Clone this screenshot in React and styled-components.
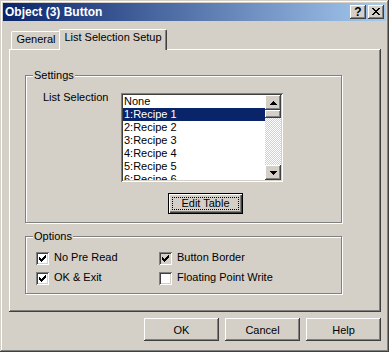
import React from 'react';
import styled, { createGlobalStyle } from 'styled-components';

const face = '#d4d0c8';

const GlobalStyle = createGlobalStyle`
  * { box-sizing: border-box; }
  html, body { margin: 0; padding: 0; background: ${face}; }
  body {
    font-family: "Liberation Sans", Arial, sans-serif;
    font-size: 11px;
    color: #000;
  }
`;

// 3D edges
const raised = `
  box-shadow: inset -1px -1px #404040, inset 1px 1px #fff,
    inset -2px -2px #808080, inset 2px 2px ${face};
`;
const sunken = `
  box-shadow: inset 1px 1px #808080, inset -1px -1px #fff,
    inset 2px 2px #404040, inset -2px -2px ${face};
`;

const Window = styled.div`
  width: 389px;
  height: 352px;
  padding: 3px;
  background: ${face};
  display: flex;
  flex-direction: column;
  box-shadow: inset -1px -1px #404040, inset 1px 1px ${face},
    inset -2px -2px #808080, inset 2px 2px #fff;
`;

const TitleBar = styled.div`
  height: 18px;
  flex: none;
  display: flex;
  align-items: center;
  padding: 0 2px;
  background: linear-gradient(to right, #0a246a, #a6caf0);
  color: #fff;
  font-weight: bold;
  font-size: 12px;
  line-height: 18px;
`;

const TitleButtons = styled.div`
  margin-left: auto;
  display: flex;
  gap: 2px;
`;

const TitleButton = styled.div`
  width: 16px;
  height: 14px;
  background: ${face};
  ${raised}
  display: flex;
  align-items: center;
  justify-content: center;
  color: #000;
  font-size: 12px;
  font-weight: bold;
  line-height: 14px;
  padding-bottom: 1px;
`;

const Body = styled.div`
  flex: 1;
  padding: 8px 5px 8px 6px;
  display: flex;
  flex-direction: column;
`;

const TabStrip = styled.div`
  height: 20px;
  display: flex;
  align-items: flex-end;
  padding-left: 2px;
`;

const Tab = styled.div`
  position: relative;
  z-index: ${(p) => (p.$active ? 1 : 0)};
  width: ${(p) => p.$width}px;
  height: ${(p) => (p.$active ? 21 : 18)}px;
  margin-left: ${(p) => (p.$active ? -2 : 0)}px;
  margin-bottom: ${(p) => (p.$active ? -1 : 0)}px;
  background: ${face};
  border-top: 1px solid #fff;
  border-left: 1px solid #fff;
  border-right: 1px solid #404040;
  border-top-left-radius: 2px;
  border-top-right-radius: 2px;
  box-shadow: inset -1px 0 #808080;
  padding-top: 1px;
  text-align: center;
  line-height: 13px;
  white-space: nowrap;
`;

const Panel = styled.div`
  height: 263px;
  background: ${face};
  box-shadow: inset -1px -1px #404040, inset 1px 1px #fff,
    inset -2px -2px #808080;
  padding: 26px 0 0 16px;
`;

const Group = styled.div`
  position: relative;
  width: 317px;
  height: ${(p) => p.$height}px;
  margin-top: ${(p) => p.$top || 0}px;
  border: 1px solid #808080;
  box-shadow: inset 1px 1px #fff, 1px 1px #fff;
  padding: ${(p) => p.$pad};
`;

const Caption = styled.span`
  position: absolute;
  top: -7px;
  left: 7px;
  padding: 0 1px;
  background: ${face};
  line-height: 13px;
`;

const SettingsRow = styled.div`
  display: flex;
`;

const FieldLabel = styled.div`
  width: 78px;
  margin-top: -2px;
  line-height: 13px;
`;

const FieldColumn = styled.div`
  display: flex;
  flex-direction: column;
`;

const ListBox = styled.div`
  width: 162px;
  height: 89px;
  padding: 2px;
  background: #fff;
  ${sunken}
  display: flex;
`;

const Items = styled.div`
  flex: 1;
  overflow: hidden;
`;

const Item = styled.div`
  height: 13px;
  line-height: 13px;
  padding-left: 1px;
  white-space: nowrap;
  background: ${(p) => (p.$selected ? '#0a246a' : 'transparent')};
  color: ${(p) => (p.$selected ? '#fff' : '#000')};
`;

const ScrollBar = styled.div`
  width: 16px;
  display: flex;
  flex-direction: column;
`;

const ScrollButton = styled.div`
  height: ${(p) => p.$height}px;
  flex: none;
  background: ${face};
  ${raised}
  display: flex;
  align-items: center;
  justify-content: center;
`;

const Track = styled.div`
  flex: 1;
  background-image: conic-gradient(#fff 25%, ${face} 0 50%, #fff 0 75%, ${face} 0);
  background-size: 2px 2px;
`;

const DefaultButton = styled.button`
  width: 75px;
  height: 21px;
  margin: 11px 0 0 47px;
  padding: 3px;
  border: 1px solid #000;
  background: ${face};
  box-shadow: inset 1px 1px #fff, inset -1px -1px #404040,
    inset -2px -2px #808080;
  font: inherit;
  color: #000;
  display: flex;
`;

const FocusRect = styled.span`
  flex: 1;
  border: 1px dotted #000;
  display: flex;
  align-items: center;
  justify-content: center;
  line-height: 11px;
`;

const OptionsGrid = styled.div`
  display: grid;
  grid-template-columns: 123px auto;
  grid-auto-rows: 13px;
  row-gap: 7px;
`;

const Option = styled.label`
  display: flex;
  align-items: flex-start;
  gap: 5px;
  line-height: 11px;
  white-space: nowrap;
`;

const CheckBox = styled.span`
  width: 13px;
  height: 13px;
  flex: none;
  background: ${(p) => (p.$gray ? face : '#fff')};
  ${sunken}
  display: flex;
  align-items: center;
  justify-content: center;
`;

const ButtonRow = styled.div`
  margin-top: 6px;
  display: flex;
  justify-content: flex-end;
  gap: 6px;
`;

const PushButton = styled.button`
  width: 75px;
  height: 23px;
  border: none;
  padding: 0;
  background: ${face};
  ${raised}
  font: inherit;
  color: #000;
`;

const Pixels = ({ w, h, d }) => (
  <svg width={w} height={h} viewBox={`0 0 ${w} ${h}`} shapeRendering="crispEdges">
    <path d={d} fill="#000" />
  </svg>
);

const CHECK =
  'M6 0h1v1h-1zM5 1h2v1h-2zM0 2h1v1h-1zM4 2h3v1h-3zM0 3h2v1h-2zM3 3h3v1h-3zM0 4h5v1h-5zM1 5h3v1h-3zM2 6h1v1h-1z';
const CLOSE =
  'M0 0h2v1h-2zM6 0h2v1h-2zM1 1h2v1h-2zM5 1h2v1h-2zM2 2h4v1h-4zM3 3h2v1h-2zM2 4h4v1h-4zM1 5h2v1h-2zM5 5h2v1h-2zM0 6h2v1h-2zM6 6h2v1h-2z';
const UP = 'M3 0h1v1h-1zM2 1h3v1h-3zM1 2h5v1h-5zM0 3h7v1h-7z';
const DOWN = 'M0 0h7v1h-7zM1 1h5v1h-5zM2 2h3v1h-3zM3 3h1v1h-1z';

const recipes = ['None', '1:Recipe 1', '2:Recipe 2', '3:Recipe 3', '4:Recipe 4', '5:Recipe 5', '6:Recipe 6'];

const options = [
  { label: 'No Pre Read', checked: true },
  { label: 'Button Border', checked: true, gray: true },
  { label: 'OK & Exit', checked: true },
  { label: 'Floating Point Write', checked: false },
];

export default function App() {
  return (
    <>
      <GlobalStyle />
      <Window>
        <TitleBar>
          Object (3) Button
          <TitleButtons>
            <TitleButton>?</TitleButton>
            <TitleButton>
              <Pixels w={8} h={7} d={CLOSE} />
            </TitleButton>
          </TitleButtons>
        </TitleBar>
        <Body>
          <TabStrip>
            <Tab $width={50}>General</Tab>
            <Tab $width={108} $active>
              List Selection Setup
            </Tab>
          </TabStrip>
          <Panel>
            <Group $height={148} $pad="17px 0 0 17px">
              <Caption>Settings</Caption>
              <SettingsRow>
                <FieldLabel>List Selection</FieldLabel>
                <FieldColumn>
                  <ListBox>
                    <Items>
                      {recipes.map((r, i) => (
                        <Item key={r} $selected={i === 1}>
                          {r}
                        </Item>
                      ))}
                    </Items>
                    <ScrollBar>
                      <ScrollButton $height={15}>
                        <Pixels w={7} h={4} d={UP} />
                      </ScrollButton>
                      <ScrollButton $height={8} />
                      <Track />
                      <ScrollButton $height={15}>
                        <Pixels w={7} h={4} d={DOWN} />
                      </ScrollButton>
                    </ScrollBar>
                  </ListBox>
                  <DefaultButton>
                    <FocusRect>Edit Table</FocusRect>
                  </DefaultButton>
                </FieldColumn>
              </SettingsRow>
            </Group>
            <Group $height={58} $top={13} $pad="15px 0 0 10px">
              <Caption>Options</Caption>
              <OptionsGrid>
                {options.map((o) => (
                  <Option key={o.label}>
                    <CheckBox $gray={o.gray}>
                      {o.checked && <Pixels w={7} h={7} d={CHECK} />}
                    </CheckBox>
                    {o.label}
                  </Option>
                ))}
              </OptionsGrid>
            </Group>
          </Panel>
          <ButtonRow>
            <PushButton>OK</PushButton>
            <PushButton>Cancel</PushButton>
            <PushButton>Help</PushButton>
          </ButtonRow>
        </Body>
      </Window>
    </>
  );
}
